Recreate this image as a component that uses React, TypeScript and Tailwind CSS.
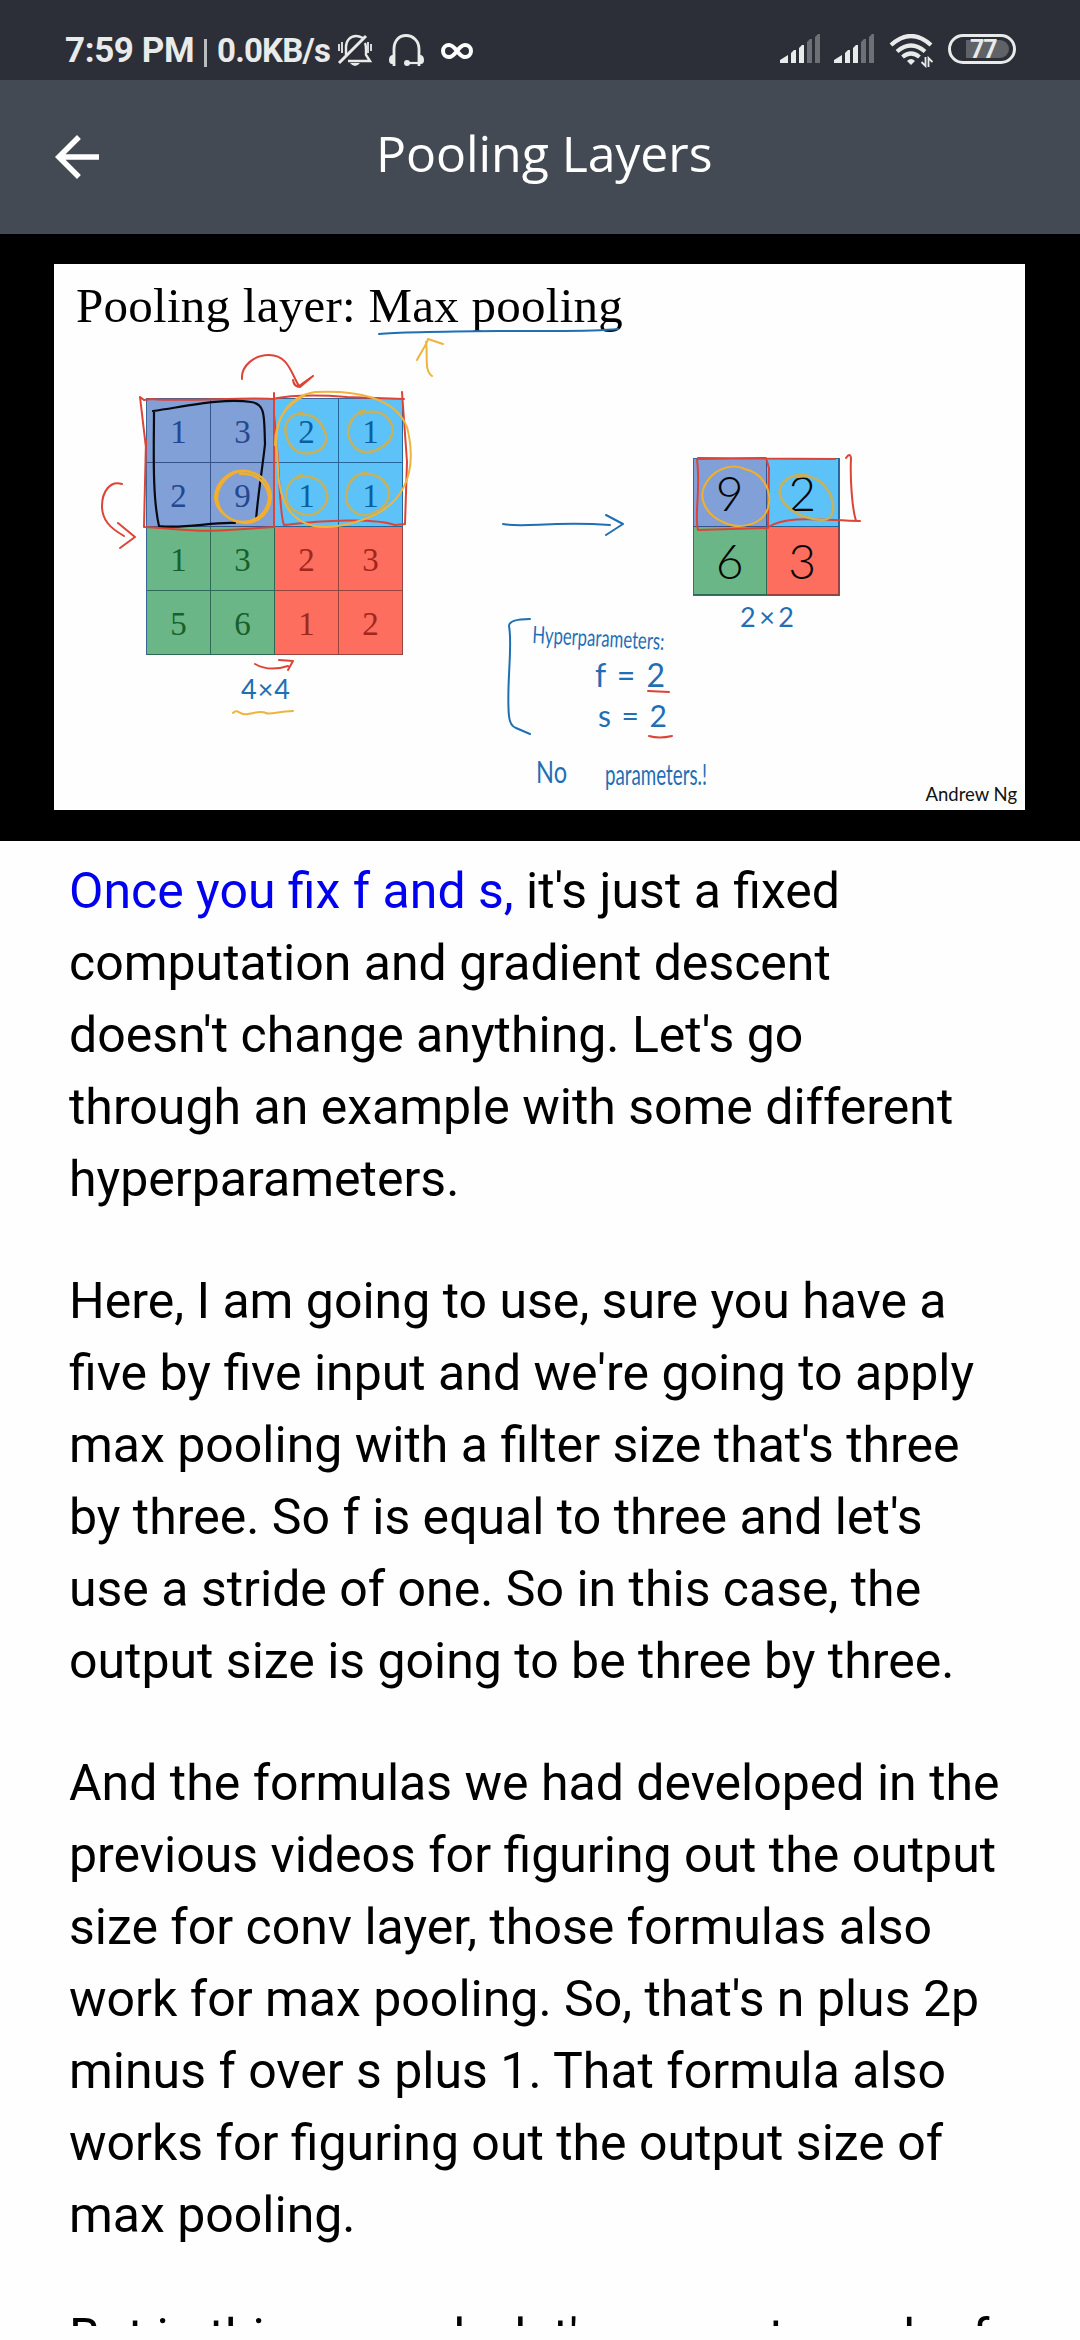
import React from "react";

const INPUT = [
  [1, 3, 2, 1],
  [2, 9, 1, 1],
  [1, 3, 2, 3],
  [5, 6, 1, 2],
];

const QUADRANTS = [
  ["bg-[#80a0d7] text-[#24488f] border-[#35548c]", "bg-[#5dc2f8] text-[#0c5f9c] border-[#23679b]"],
  ["bg-[#6ab686] text-[#17602c] border-[#2c6a55]", "bg-[#fd6e5e] text-[#a3251b] border-[#99433f]"],
];

function StatusBar() {
  return (
    <div className="flex h-20 items-start justify-between bg-[#2c2f37] pl-[65px] pr-[64px] pt-[34px] font-['Roboto'] font-bold text-[#e9eaea]">
      <div className="flex h-[33px] items-center">
        <span className="w-[129px] whitespace-nowrap text-[35px] leading-[33px] tracking-[-0.4px]">7:59 PM</span>
        <span className="ml-[9.5px] h-[28px] w-[3.5px] self-end bg-[#b9bbbd]" />
        <span className="ml-[10px] w-[114px] whitespace-nowrap text-[33px] leading-[35px] tracking-[-0.8px]">0.0KB/s</span>
        <svg className="ml-[6px] h-[34px] w-[36px]" viewBox="338 34 36 34" fill="none" stroke="#e9eaea" strokeWidth="2.4">
          <path d="M347 55V47c0-6 4-11 10-11 3 0 5 1 7 2M366 43c1 2 1 4 1 7v5l4 6h-22" />
          <path d="M340 63l27-27" strokeWidth="3" />
          <path d="M340 44v7M343 42v11M369 42v11M372 44v7" strokeWidth="1.8" />
          <path d="M351 63h10q-5 6-10 0z" fill="#e9eaea" stroke="none" />
        </svg>
        <svg className="ml-[15px] h-[34px] w-[36px]" viewBox="388 34 36 34" fill="none" stroke="#e9eaea" strokeWidth="2.8">
          <path d="M394 66V49c0-8 5-13.500 12-13.500S419 41 419 49v17" />
          <path d="M408 63h12" strokeWidth="2.200" />
          <circle cx="407" cy="63" r="3" fill="#e9eaea" stroke="none" />
          <path d="M394 55h-2q-3 1-3 5t3 4h2zM419 55h2q3 1 3 5t-3 4h-2z" fill="#e9eaea" stroke="none" />
        </svg>
        <svg className="ml-[17px] h-[18px] w-[32px]" viewBox="441 40 32 18" fill="none" stroke="#ffffff" strokeWidth="4">
          <path d="M457 49c-3-4-5-6-8-6a6 6 0 0 0 0 12c3 0 5-2 8-6s5-6 8-6a6 6 0 0 1 0 12c-3 0-5-2-8-6z" />
        </svg>
      </div>
      <div className="flex items-start">
        <Signal />
        <span className="w-[14px]" />
        <Signal />
        <svg className="ml-[15px] h-[34px] w-[44px]" viewBox="889 34 44 34" fill="none" stroke="#e9eaea" strokeWidth="4.200">
          <path d="M891 45q20-18 40 0" />
          <path d="M897 51.500q14-12 28 0" />
          <path d="M902.500 57q8.500-7 17 0" />
          <path d="M907 61q4-4 8 0l-4 4z" fill="#e9eaea" stroke="none" />
          <path d="M925.500 57v9l-4-4M928.500 67v-9l4 4" strokeWidth="1.800" />
        </svg>
        <span className="ml-[15px] flex h-[30px] w-[68px] items-center justify-center rounded-full border-[3px] border-[#e9eaea]">
          <span className="ml-[11px] flex h-[18px] w-[43px] items-center rounded-l-[2px] rounded-r-full bg-[#5f6267] pl-[4px] pt-[2px] text-[25px] leading-[18px] tracking-[-1px]">77</span>
        </span>
      </div>
    </div>
  );
}

function Signal() {
  return (
    <svg className="h-[29px] w-[40px]" viewBox="0 0 40 29" fill="#e9eaea">
      <path d="M0 29v-3l8-5v8zM11 29V19l3-3h2v13zM19 29V14l3-3h2v18z" />
      <path d="M27 29V8l3-3h2v24zM35 29V3l3-3h2v29z" fill="#6d7074" />
    </svg>
  );
}

function Header() {
  return (
    <header className="flex h-[154px] items-center bg-[#444a54] pl-[55px] text-white">
      <svg className="h-[44px] w-[44px]" viewBox="4 4 16 16" fill="currentColor">
        <path d="M20 11H7.830l5.590-5.590L12 4l-8 8 8 8 1.410-1.410L7.830 13H20z" />
      </svg>
      <h1 className="mb-[9px] ml-[277px] whitespace-nowrap font-['Open_Sans'] text-[50px] leading-[68px] tracking-[-0.08px]">Pooling Layers</h1>
    </header>
  );
}

function Annotations() {
  return (
    <svg className="absolute inset-0 h-full w-full" viewBox="54 264 971 546" fill="none" strokeWidth="2" strokeLinecap="round" strokeLinejoin="round">
      <g stroke="#1f6fb5">
        <path d="M379 334c20-2 60-2.500 120-3s90 1 119-2" />
        <path d="M503 524c20 4 50-3 107 1M606 515l17 9-17 11" />
        <path d="M530 619c-12 0-21 2-21 7 4 20-3 60 0 90q1 10 7 12l14 6" />
      </g>
      <g stroke="#dc4437">
        <path d="M242 379c-1-13 12-24 27-24 19 0 22 18 30 31l14-10M293 380q1 7 7 7l13-11" />
        <path d="M122 484c-12-4-20 8-20 22s8 22 22 30M118 523l17 14-15 11" />
        <path d="M255 664q14 8 33 2M279 660l14 1-5 9" />
        <path d="M146 448l-6-51 4 3 8-1c30 3 90-2 120 0 20-4 50-4 75-2l57 2M274 393v134M146 440l-2 87c30 1 50 6 85 3l45-3M402 392l5 70-2 62-10 1c-20-7-70-5-111 0-5-10-4-60-10-110" />
        <path d="M698 459l68-1 3 10-1 60-70 2c-4-15 3-40-1-70M698 458l137 1M768 527c20-12 50-7 92-6M846 458q4-6 5 0c-1 20 1 50 5 63" />
        <path d="M648 691l21 1M649 736q10 3 23 0" />
      </g>
      <path d="M153 411c35-5 70-13 98-9 15 2 13 15 14 42-2 20-7 50-9 76M235 523c-25-1-50 6-76 3-7-30-5-80-5-115" stroke="#080a10" strokeWidth="2.200" />
      <g stroke="#eeb43e">
        <path d="M417 360c4-8 9-14 11-21l15 5M426 342c2 13-2 29 6 34" />
        <path d="M233 713c5-5 7 3 15 1s14-3 18-1 13-2 27-2" />
        <path d="M275 445c0-27 14-49 40-53 40-2 80 5 92 35 12 48-5 80-45 93-50 17-82 4-84-50-1-30-9-56 26-74" />
      </g>
      <g stroke="#c7b15b" strokeWidth="2.500">
        <path d="M302 413c-12 1-19 11-16 22 4 14 13 20 25 18 13-2 18-13 14-21-4-10-10-19-24-17" />
        <path d="M365 410c-12 3-17 15-17 24 4 15 13 21 26 17 14-5 21-15 18-26-5-12-16-16-32-11" />
        <path d="M302 475c-10 3-16 11-16 22 1 11 12 18 23 18 12-1 20-12 18-21-3-13-14-21-31-16" />
        <path d="M367 473c-14 0-20 12-21 24 1 12 10 19 21 18 14-3 23-13 22-23-2-12-13-20-29-18" />
        <path d="M809 476c-18-4-31 6-29 19 4 14 22 24 43 25 13-1 11-14 8-24-5-11-16-23-34-19" />
      </g>
      <g stroke="#f2ae2d" strokeWidth="2.400">
        <path d="M251 472c-20-6-35 10-36 25 1 14 14 25 31 26 15-1 24-12 25-26-1-18-15-26-29-26-13 1-25 14-25 28 2 14 12 22 26 23 15-1 25-10 26-25-2-15-13-24-29-23" />
        <path d="M745 469c-16-7-34 2-41 18-6 15 5 29 19 35 18 9 40 2 45-14 5-18-6-36-24-39" strokeWidth="2" />
      </g>
      <g fill="#1f6fb5" stroke="none" fontFamily="Lato, sans-serif" fontWeight="400">
        <text x="241" y="699" fontSize="27" textLength="49">4×4</text>
        <text x="740" y="627" fontSize="27" textLength="54">2×2</text>
        <text transform="translate(532 643) rotate(3)" fontSize="24" textLength="132" lengthAdjust="spacingAndGlyphs">Hyperparameters:</text>
        <text x="595" y="687" fontSize="32" textLength="70">f = 2</text>
        <text x="598" y="727" fontSize="30" textLength="69">s = 2</text>
        <text x="536" y="783" fontSize="30" textLength="31" lengthAdjust="spacingAndGlyphs">No</text>
        <text x="605" y="785" fontSize="28" textLength="102" lengthAdjust="spacingAndGlyphs">parameters.!</text>
      </g>
    </svg>
  );
}

function Slide() {
  const cells = INPUT.flatMap((row, r) =>
    row.map((value, c) => ({ value, key: r + "-" + c, tone: QUADRANTS[r >> 1][c >> 1] })),
  );
  const output = [9, 2, 6, 3].map((value, i) => ({ value, tone: QUADRANTS[i >> 1][i % 2] }));
  return (
    <div className="h-[607px] bg-black pl-[54px] pt-[30px]">
      <div className="relative flex h-[546px] w-[971px] flex-col bg-[#fefefe]">
        <h2 className="h-[134px] whitespace-nowrap pl-[22px] pt-[14px] font-['Liberation_Serif'] text-[49px] leading-[56px] tracking-[0.26px] text-black">
          Pooling layer: Max pooling
        </h2>
        <div className="flex items-start pl-[92px]">
          <div className="grid h-[257px] w-[257px] grid-cols-4 grid-rows-4 border-l border-t border-[#3b6595] font-['Liberation_Serif'] text-[33px]">
            {cells.map((cell) => (
              <div key={cell.key} className={"flex items-center justify-center border-b border-r pt-[3px] leading-none " + cell.tone}>
                {cell.value}
              </div>
            ))}
          </div>
          <div className="ml-[290px] mt-[60px] grid h-[138px] w-[147px] grid-cols-2 grid-rows-2 border border-[#3b6595] font-['Lato'] text-[48px] font-light">
            {output.map((cell) => (
              <div key={cell.value} className={"flex items-center justify-center border-b border-r leading-none " + cell.tone}>
                <span className="text-[#050505]">{cell.value}</span>
              </div>
            ))}
          </div>
        </div>
        <p className="mt-auto self-end pr-[8px] font-['Lato'] text-[18.500px] leading-[32px] text-[#111111]">Andrew Ng</p>
        <Annotations />
      </div>
    </div>
  );
}

const PARAGRAPHS = [
  ["Here, I am going to use, sure you have a", "five by five input and we're going to apply", "max pooling with a filter size that's three", "by three. So f is equal to three and let's", "use a stride of one. So in this case, the", "output size is going to be three by three."],
  ["And the formulas we had developed in the", "previous videos for figuring out the output", "size for conv layer, those formulas also", "work for max pooling. So, that's n plus 2p", "minus f over s plus 1. That formula also", "works for figuring out the output size of", "max pooling."],
  ["But in this example, let's compute each of"],
];

function Lines({ lines }: { lines: string[] }) {
  return (
    <>
      {lines.map((line) => (
        <span key={line} className="block whitespace-nowrap">
          {line}
        </span>
      ))}
    </>
  );
}

export default function App() {
  return (
    <div className="flex h-[2340px] w-[1080px] flex-col overflow-hidden bg-[#fefefe]">
      <StatusBar />
      <Header />
      <Slide />
      <main className="h-[1485px] overflow-hidden pl-[69px] pt-[14px] font-['Roboto'] text-[50px] leading-[72px] text-black">
        <p className="mb-[50px]">
          <span className="block whitespace-nowrap">
            <span className="text-[#0000ee]">Once you fix f and s,</span> it's just a fixed
          </span>
          <Lines lines={["computation and gradient descent", "doesn't change anything. Let's go", "through an example with some different", "hyperparameters."]} />
        </p>
        {PARAGRAPHS.map((lines) => (
          <p key={lines[0]} className="mb-[50px]">
            <Lines lines={lines} />
          </p>
        ))}
      </main>
    </div>
  );
}
